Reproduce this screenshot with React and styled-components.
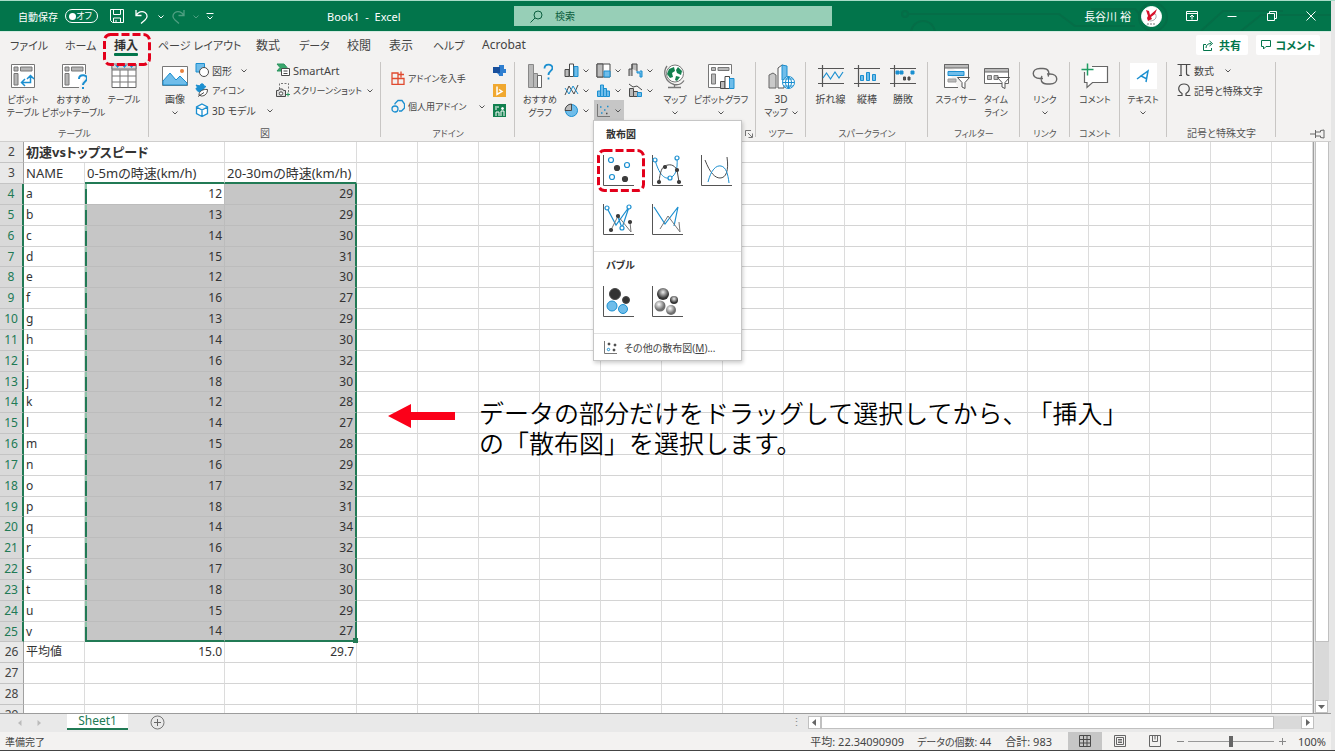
import React from 'react'
import styled, { createGlobalStyle, css } from 'styled-components'

const GREEN = '#02754b'
const BLUE = '#1b8fd0'
const LIGHTBLUE = '#6fbdea'
const INK = '#4a4a4a'

const GlobalStyle = createGlobalStyle`
* { box-sizing: border-box; }
body {
  margin: 0;
  background: #e6e6e6;
  color: #444;
  font-family: "Noto Sans", "Noto Sans CJK JP", sans-serif;
  font-size: 11px;
  font-feature-settings: "palt";
  overflow: hidden;
}
button, input {
  font: inherit;
  font-feature-settings: inherit;
  color: inherit;
  border: 0;
  padding: 0;
  margin: 0;
  background: none;
}
svg { display: block; flex: none; }
`

const Window = styled.div`
height: 100vh;
display: flex;
flex-direction: column;
padding-right: 4px;
border-top: 1px solid #a9dcc8;
border-bottom: 1px solid #444;
`

/* ---------- title bar ---------- */

const TitleBar = styled.header`
position: relative;
display: flex;
align-items: center;
height: 30px;
flex: none;
background: ${GREEN};
color: #fff;
`

const Circuit = styled.svg`
position: absolute;
right: 0;
top: 0;
`

const TitleLeft = styled.div`
width: 327px;
padding-left: 18px;
display: flex;
align-items: center;
`

const AutoSave = styled.label`
display: flex;
align-items: center;
gap: 6px;
width: 92px;
white-space: nowrap;
`

const AutoSaveText = styled.span`
width: 41px;
font-size: 10px;
`

const Toggle = styled.span`
position: relative;
display: flex;
align-items: center;
justify-content: space-between;
width: 33px;
height: 14px;
padding: 0 5px 0 3px;
border: 1px solid #fff;
border-radius: 7px;
font-size: 9px;
line-height: 12px;

&::before {
  content: "";
  width: 7px;
  height: 7px;
  border-radius: 50%;
  background: #fff;
}
`

const ToggleInput = styled.input`
position: absolute;
inset: 0;
opacity: 0;
`

const IconButton = styled.button`
display: flex;
align-items: center;
justify-content: center;
width: ${(p) => p.$w || 20}px;
height: ${(p) => p.$h || 20}px;
flex: none;
opacity: ${(p) => (p.disabled ? 0.3 : 1)};
`

const DocTitle = styled.div`
width: 187px;
white-space: pre;
`

const SearchBox = styled.label`
display: flex;
align-items: center;
gap: 12px;
width: 318px;
height: 20px;
padding-left: 16px;
background: #97cfb7;
color: #0c5f40;
z-index: 1;
`

const SearchInput = styled.input`
flex: 1;
font-size: 10px;
&::placeholder { color: #0c5f40; opacity: 1; }
`

const TitleRight = styled.div`
flex: 1;
display: flex;
align-items: center;
justify-content: flex-end;
z-index: 1;
`

const UserButton = styled.button`
display: flex;
align-items: center;
gap: 10px;
margin-right: 10px;
`

/* ---------- ribbon tabs ---------- */

const TabRow = styled.nav`
display: flex;
align-items: center;
height: 29px;
flex: none;
padding: 0 11px 0 10px;
background: #f3f2f1;
border-top: 1px solid #d5ebe2;
`

const Tab = styled.button`
position: relative;
width: ${(p) => p.$w}px;
height: 28px;
padding-bottom: 3px;
text-align: left;
white-space: nowrap;
font-size: ${(p) => p.$size}px;

${(p) => p.$active && css`
  font-weight: 700;
  color: #333;
  &::after {
    content: "";
    position: absolute;
    left: 0;
    top: 21px;
    width: 24px;
    height: 3px;
    border-radius: 1px;
    background: ${GREEN};
  }
`}
`

const MarkSvg = styled.svg`
position: absolute;
left: ${(p) => p.$left}px;
top: ${(p) => p.$top}px;
z-index: 3;
pointer-events: none;
`

const TabSpacer = styled.div`
flex: 1;
`

const ShareButton = styled.button`
display: flex;
align-items: center;
justify-content: center;
gap: 5px;
width: ${(p) => p.$w}px;
height: 20px;
margin: 0 0 2px 8px;
border-radius: 2px;
background: #fff;
color: ${GREEN};
font-weight: 700;
font-size: 11px;
white-space: nowrap;
`

/* ---------- ribbon ---------- */

const RibbonBar = styled.div`
display: flex;
height: 82px;
flex: none;
background: #f3f2f1;
border-bottom: 1px solid #cfcecd;
`

const GroupBox = styled.section`
position: relative;
display: flex;
flex-direction: column;
width: ${(p) => p.$w}px;
flex: none;

&::after {
  content: "";
  position: absolute;
  right: 0;
  top: 2px;
  width: 1px;
  height: 75px;
  background: #c8c6c4;
}
`

const GroupBody = styled.div`
flex: 1;
display: flex;
align-items: flex-start;
padding-left: ${(p) => p.$pad || 0}px;
`

const GroupName = styled.div`
height: 15px;
line-height: 15px;
text-align: center;
font-size: ${(p) => p.$size}px;
color: #555;
`

const BigBtn = styled.button`
display: flex;
flex-direction: column;
align-items: center;
width: ${(p) => p.$w}px;
padding-top: 3px;
line-height: 13px;
white-space: nowrap;
`

const BigLabel = styled.span`
display: flex;
flex-direction: column;
align-items: center;
margin: 4px -10px 0;
`

const BigLine = styled.span`
display: flex;
gap: 4px;
font-size: ${(p) => p.$size}px;
`

const Column = styled.div`
display: flex;
flex-direction: column;
width: ${(p) => p.$w}px;
padding-top: ${(p) => p.$top || 0}px;
gap: ${(p) => p.$gap || 0}px;
`

const SmallBtn = styled.button`
display: flex;
align-items: center;
gap: 3px;
height: 20px;
font-size: ${(p) => p.$size}px;
white-space: nowrap;
`

const SmallText = styled.span`
margin-right: ${(p) => p.$after || 0}px;
`

const ChartGrid = styled.div`
display: grid;
grid-template-columns: repeat(3, 32px);
grid-auto-rows: 20px;
width: 98px;
`

const ChartBtn = styled.button`
display: flex;
align-items: center;
gap: 4px;
width: 30px;
height: 20px;
padding-left: 2px;
background: ${(p) => (p.$open ? '#c6c6c6' : 'none')};
`

const MenuAnchor = styled.div`
position: relative;
`

const TextTile = styled.span`
display: flex;
align-items: center;
justify-content: center;
width: 27px;
height: 26px;
background: #fff;
`

const Launcher = styled.button`
position: absolute;
right: 3px;
bottom: 3px;
`

const RibbonEnd = styled.div`
flex: 1;
display: flex;
justify-content: flex-end;
align-items: flex-end;
padding: 0 6px 1px 0;
`

/* ---------- chart menu ---------- */

const Menu = styled.div`
position: absolute;
left: -1px;
top: 20px;
width: 149px;
z-index: 5;
background: #fff;
border: 1px solid #c6c6c6;
box-shadow: 1px 2px 4px rgba(0, 0, 0, 0.2);
`

const MenuTitle = styled.h3`
margin: 0;
padding: 5px 12px 0;
height: 25px;
font-size: 10px;
line-height: 17px;
color: #333;
`

const MenuGrid = styled.div`
display: grid;
grid-template-columns: repeat(3, 49px);
grid-auto-rows: 49px;
padding-bottom: ${(p) => p.$bottom}px;
border-bottom: 1px solid #e1e1e1;
`

const MenuItem = styled.button`
position: relative;
display: flex;
align-items: center;
justify-content: center;
`

const MenuFooter = styled.button`
display: flex;
align-items: center;
gap: 6px;
width: 100%;
height: 26px;
padding-left: 9px;
font-size: 10px;
white-space: nowrap;
`

/* ---------- sheet ---------- */

const SheetArea = styled.main`
flex: 1;
min-height: 0;
display: flex;
`

const SheetPane = styled.div`
position: relative;
flex: 1;
overflow: hidden;
background: #fff;
border-right: 1px solid #a0a0a0;
`

const Table = styled.table`
width: 100%;
table-layout: fixed;
border-collapse: separate;
border-spacing: 0;
font-size: 12px;
color: #333;
`

const Row = styled.tr`
height: 21px;
&:nth-child(6n) { height: 20px; }
`

const RowHead = styled.th`
padding: 0;
font-weight: 400;
line-height: 18px;
text-align: center;
color: ${(p) => (p.$on ? '#217a55' : '#444')};
background: ${(p) => (p.$on ? '#d9d9d9' : '#e9e9e9')};
border-bottom: 1px solid #c4c4c4;
border-right: ${(p) => (p.$on ? '2px solid #217a55' : '1px solid #a0a0a0')};
`

const Cell = styled.td`
position: relative;
padding: 0 2px;
line-height: 18px;
white-space: nowrap;
font-size: ${(p) => (p.$wide ? 13 : 12)}px;
text-align: ${(p) => (p.$num ? 'right' : 'left')};
font-weight: ${(p) => (p.$bold ? 700 : 400)};
border-right: 1px solid #dcdcdc;
border-bottom: 1px solid #d4d4d4;

${(p) => p.$selected && css`
  background-color: ${p.$cursor ? '#fff' : '#c6c6c6'};
  border-color: #bcbcbc;
`}
${(p) => p.$edgeLeft && css`
  background-image: linear-gradient(#8cc4a8 5px, #217a55 5px);
  background-size: 2px 100%;
  background-repeat: no-repeat;
`}
${(p) => p.$edgeRight && css`border-right: 2px solid #217a55;`}
${(p) => p.$edgeBottom && css`border-bottom: 2px solid #217a55;`}
`

const FillHandle = styled.span`
position: absolute;
right: -3px;
bottom: -3px;
width: 5px;
height: 5px;
background: #217a55;
z-index: 1;
`

const Note = styled.div`
position: absolute;
left: 388px;
top: 255px;
display: flex;
gap: 24px;
color: #000;
font-family: "Noto Sans CJK JP", sans-serif;
font-feature-settings: normal;
text-spacing-trim: space-all;
font-size: 25px;
font-weight: 350;
line-height: 30px;
white-space: nowrap;
`

const NoteText = styled.p`
margin: 0;
`

const VScroll = styled.div`
display: flex;
flex-direction: column;
width: 17px;
padding: 0 2px 0 1px;
background: #e6e6e6;
`

const VThumb = styled.div`
flex: 500;
background: #fff;
border: 1px solid #c0c0c0;
border-top: 0;
`

const VTrack = styled.div`
flex: 58;
background: #d9d9d9;
`

const ScrollButton = styled.button`
display: flex;
align-items: center;
justify-content: center;
width: 13px;
height: 13px;
background: #fff;
border: 1px solid #c0c0c0;
`

/* ---------- bottom bars ---------- */

const SheetBar = styled.div`
display: flex;
align-items: flex-start;
height: 19px;
flex: none;
padding-right: 17px;
background: #e9e9e9;
border-top: 1px solid #9c9c9c;
`

const SheetNav = styled.div`
display: flex;
width: 67px;
padding-left: 10px;
`

const SheetTab = styled.button`
width: 61px;
height: 16px;
background: #fff;
color: #217a55;
border-bottom: 2px solid #217a55;
font-size: 12px;
line-height: 12px;
`

const SheetSpacer = styled.div`
flex: 1;
`

const Grip = styled.span`
width: 17px;
color: #888;
line-height: 16px;
`

const HScroll = styled.div`
display: flex;
width: 506px;
height: 13px;
margin-top: 2px;
background: #d9d9d9;
`

const HThumb = styled.div`
width: 453px;
background: #fff;
border: 1px solid #c0c0c0;
`

const StatusBar = styled.footer`
display: flex;
align-items: center;
height: 18px;
flex: none;
padding: 0 5px;
background: #f3f2f1;
font-size: 10px;
`

const Stat = styled.span`
margin-right: ${(p) => p.$after}px;
font-size: ${(p) => p.$size}px;
white-space: nowrap;
`

const ViewButton = styled(IconButton)`
height: 18px;
background: ${(p) => (p.$on ? '#c6c6c6' : 'none')};
`

const ZoomRange = styled.input`
appearance: none;
width: 86px;
height: 12px;
background: linear-gradient(#999, #999) center / 100% 1px no-repeat;
&::-webkit-slider-thumb {
  appearance: none;
  width: 4px;
  height: 11px;
  background: #666;
}
`

const ZoomText = styled.button`
width: 36px;
text-align: right;
font-size: 11px;
`

/* ---------- icons ---------- */

const Icon = ({ size = 14, w, h, box, children }) => (
  <svg
    width={w || size}
    height={h || size}
    viewBox={box || `0 0 ${w || size} ${h || size}`}
    fill="none"
    stroke={INK}
    aria-hidden="true"
  >
    {children}
  </svg>
)

const Chevron = ({ color = '#555' }) => (
  <Icon w={6} h={13}>
    <path d="M.5 5.5 3 8l2.5-2.5" stroke={color} />
  </Icon>
)

const RedMark = ({ w, h, left, top }) => (
  <MarkSvg width={w} height={h} $left={left} $top={top} aria-hidden="true">
    <rect x="1.5" y="1.5" width={w - 3} height={h - 3} rx="6" fill="none" stroke="#e3001b" strokeWidth="3" strokeDasharray="8 3" />
  </MarkSvg>
)

const SaveIcon = () => (
  <Icon size={14}>
    <path d="M.5.5h13v13h-11l-2-2zM3.5.5v5h7v-5M3.5 13.500V9h7v4.500M6 11v2" stroke="#fff" />
  </Icon>
)

const UndoIcon = ({ flip }) => (
  <Icon size={15}>
    <g transform={flip ? 'matrix(-1 0 0 1 15 0)' : undefined}>
      <path d="M2 1v5.500h5.500M2 6.500C4 3 8 1.500 11 3.500c3 2.200 2.500 5.500 0 7.500l-4 3.500" stroke="#fff" strokeWidth="1.300" />
    </g>
  </Icon>
)

const PivotIcon = ({ kind }) => (
  <Icon size={26}>
    <path d={kind === 'ask' ? 'M18 24.500H1.500v-23h23V11' : 'M1.500 1.500h23v23h-23z'} fill="#fff" stroke="#777" />
    <path d="M4 4h4v4H4zM10.500 4H22v4H10.500zM4 10.500h4V22H4z" fill="#b5b5b5" stroke="#777" />
    {kind === 'ask' ? (
      <path d="M18 16c0-5 8-5 8-.500 0 3-4 3-4 6.500M22 24v2" stroke={BLUE} strokeWidth="2" />
    ) : (
      <path d="M12 19.500h8.500V13M15 16l-3.500 3.500L15 23M17 16l3.500-3.500L24 16" stroke={BLUE} strokeWidth="1.500" />
    )}
  </Icon>
)

const TableIcon = () => (
  <Icon size={26}>
    <path d="M1 1.500h24v23H1z" fill="#fff" stroke="#666" />
    <path d="M1 7h24M1 13h24M1 19h24M9 7v17.500M17 7v17.500" stroke="#777" />
    <path d="M1 1h24v5H1z" fill="#d8d8d8" stroke="#777" />
    <path d="M4 2h5L6.500 5zM11 2h5l-2.500 3zM18 2h5l-2.500 3z" fill={BLUE} stroke="none" />
  </Icon>
)

const PictureIcon = () => (
  <Icon size={26}>
    <path d="M.5 3.500h25v19H.5z" fill="#fff" stroke="#777" />
    <path d="M1 18l7-8 6 7 4-4 7 7v2H1z" fill={LIGHTBLUE} stroke={BLUE} />
    <circle cx="20" cy="8" r="2" fill="#e8803a" stroke="none" />
  </Icon>
)

const ShapesIcon = () => (
  <Icon size={14}>
    <path d="M1 .5h8.500v8.500H1z" fill={LIGHTBLUE} stroke={BLUE} />
    <circle cx="9" cy="9" r="4.500" fill="#fff" />
  </Icon>
)

const BirdIcon = () => (
  <Icon size={14}>
    <path d="M1 2l4 1c0-3 4-3 4 0l2 .5-2 1.500c0 3-2 4-4 4-2 0-4-2-4-4l2 0z" fill={BLUE} stroke={BLUE} />
    <path d="M4 12c0-4 4-6 8.500-5.500 0 4-2.500 6.500-6 6.500zM3 13.500l6-4" fill="#fff" />
  </Icon>
)

const CubeIcon = () => (
  <Icon size={14}>
    <path d="M7 1l5.500 3v6.500L7 13.500l-5.500-3V4zM1.500 4L7 7l5.500-3M7 7v6.500" fill="#fff" stroke={BLUE} strokeWidth="1.300" />
  </Icon>
)

const SmartArtIcon = () => (
  <Icon size={14}>
    <path d="M1 1h7l3 3.500L8 8H1l3-3.500z" fill="#3aa66c" stroke="#2b9560" />
    <path d="M5.500 5.500h8v7h-8zM7.500 8h4M7.500 10.500h4" fill="#fff" />
  </Icon>
)

const ShotIcon = () => (
  <Icon size={14}>
    <path d="M3.500 6V.5h9V9" strokeDasharray="2 1.500" stroke="#777" />
    <path d="M.5 7.500h2l1-1.500h3l1 1.500h2v6h-9z" fill="#ddd" />
    <circle cx="5" cy="10.500" r="1.700" fill="#fff" />
    <path d="M12 9.500v4M10 11.500h4" stroke="#2b9560" />
  </Icon>
)

const StoreIcon = () => (
  <Icon size={14}>
    <path d="M1 2h6v11.500H1zM1 7.500h12v6H7M10 .5v6M7 3.500h6" stroke="#e04a2f" strokeWidth="1.300" />
  </Icon>
)

const MyAddinIcon = () => (
  <Icon size={14}>
    <path d="M4 5.500V4.500L7 1.500h4L13.500 5v4l-3 3H8" stroke={BLUE} strokeWidth="1.300" />
    <circle cx="4" cy="10" r="3" stroke={BLUE} strokeWidth="1.300" />
  </Icon>
)

const VisioIcon = () => (
  <Icon size={13}>
    <path d="M7 1l5.500 5.500L7 12 3 8z" fill="#2f7fd0" stroke="none" />
    <path d="M6 1h5v4h2v4h-3v3H6z" fill="#2f7fd0" stroke="none" />
    <path d="M0 3h7v6H0z" fill="#174f9c" stroke="none" />
  </Icon>
)

const BingIcon = () => (
  <Icon size={13}>
    <path d="M0 0h13v13H0z" fill="#f0a830" stroke="none" />
    <path d="M4 2.500v8l5-3-3-2" stroke="#fff" strokeWidth="1.500" />
  </Icon>
)

const PeopleIcon = () => (
  <Icon size={13}>
    <path d="M0 0h13v13H0z" fill="#12804f" stroke="none" />
    <path d="M2 3h4M2 5h2M3 12V8h3v4M8 12V7h3v5" stroke="#fff" />
    <circle cx="9.500" cy="4.500" r="1" fill="#fff" stroke="#fff" />
  </Icon>
)

const AskChartIcon = () => (
  <Icon size={26}>
    <path d="M1.500 1.500h5v23h-5z" fill="#b9b9b9" stroke="#888" />
    <path d="M6.500 10.500h4v14h-4z" fill="#b9b9b9" stroke="#888" />
    <path d="M10.500 12.500h4v12h-4z" fill="#fff" stroke="#666" />
    <path d="M17.500 5.500c0-5 8-5 8-.500 0 3-4 3-4 7M21.500 14.500v2" stroke={BLUE} strokeWidth="1.800" />
  </Icon>
)

const ColumnIcon = () => (
  <Icon size={15}>
    <path d="M1 6.500h4v7H1z" fill="#bbb" />
    <path d="M5.500 1h4v12.500h-4z" fill="#fff" />
    <path d="M10 3.500h4v10h-4z" fill={LIGHTBLUE} stroke={BLUE} />
  </Icon>
)

const TreemapIcon = () => (
  <Icon size={15}>
    <path d="M1 1h13v13H1z" fill="#fff" />
    <path d="M1 1h6v13H1z" fill="#bbb" />
    <path d="M8 8h6v6H8z" fill={LIGHTBLUE} stroke={BLUE} />
  </Icon>
)

const WaterfallIcon = () => (
  <Icon size={15}>
    <path d="M1 13V6h3v7M4 6V1h5v7M4 1v5" fill="#bbb" />
    <path d="M9 8v2h3v4h2V8h-2" fill={LIGHTBLUE} stroke={BLUE} />
  </Icon>
)

const LineIcon = () => (
  <Icon size={15}>
    <path d="M1 12L5 3l5 8 4-9" />
    <path d="M1 5l4 6 4-8 5 8" stroke={BLUE} />
  </Icon>
)

const HistogramIcon = () => (
  <Icon size={15}>
    <path d="M1.500 13.500V8h3v5.500zM4.500 13.500V2h3v11.500zM7.500 13.500v-8h3v8zM10.500 13.500V8h3v5.500z" fill={LIGHTBLUE} stroke={BLUE} />
  </Icon>
)

const ComboIcon = () => (
  <Icon size={15}>
    <path d="M1.500 5.500h4v8h-4zM5.500 8.500h4v5h-4z" fill="#bbb" />
    <path d="M9.500 9.500h4v4h-4z" fill={LIGHTBLUE} stroke={BLUE} />
    <path d="M1 1l4 3 4-1 5 4" />
  </Icon>
)

const PieIcon = () => (
  <Icon size={15}>
    <circle cx="7.500" cy="7.500" r="6" fill={LIGHTBLUE} stroke={BLUE} />
    <path d="M7.500 7.500V1A6.500 6.500 0 001 7.500z" fill="#bbb" />
  </Icon>
)

const ScatterIcon = () => (
  <Icon size={15}>
    <path d="M1.500 1v12.500H14" stroke="#777" />
    <path d="M4 4h1.500M8 7h1.500M11 3.500h1.500M5 10h1.500" stroke={BLUE} strokeWidth="1.500" />
    <path d="M10 10.500h1.500" strokeWidth="1.500" />
  </Icon>
)

const GlobeIcon = () => (
  <Icon size={26}>
    <circle cx="13" cy="10.500" r="8.500" fill="#fff" stroke="#777" />
    <path d="M7 6l5-2 1 4-3 2 1 4-3 1-3-4zM16 4l4 4-1 4-4-2-1-3zM14 13l4 1-3 4-2-1z" fill="#12804f" stroke="none" />
    <path d="M5 3C.5 9 3 19 12 21.500c5 1 8-1 10-4M12.500 21.500v3M6 24.500h13" stroke="#777" strokeWidth="1.300" />
  </Icon>
)

const PivotChartIcon = () => (
  <Icon w={28} h={26}>
    <path d="M13 24.500H1.500v-23h23V11" fill="#fff" stroke="#777" />
    <path d="M4.500 4.500h4v3h-4zM11 4.500h11v3H11zM4.500 11h4v10h-4z" fill="#b9b9b9" stroke="#777" />
    <path d="M13.500 18.500h4.500v7h-4.500z" fill="#bbb" />
    <path d="M18 13.500h4.500v12H18z" fill="#fff" />
    <path d="M22.500 15.500H27v10h-4.500z" fill={LIGHTBLUE} stroke={BLUE} />
  </Icon>
)

const Map3DIcon = () => (
  <Icon w={27} h={26}>
    <path d="M1 12l4-2 3 2v13H1z" fill="#c9c9c9" stroke="#666" />
    <path d="M10 5l4-3 2 1v22h-6z" fill="#fff" stroke="#555" />
    <path d="M14 2l5 1v14h-5z" fill={LIGHTBLUE} stroke={BLUE} />
    <circle cx="20.500" cy="19.500" r="6" fill="#fff" stroke={BLUE} />
    <path d="M14.500 19.500h12M20.500 13.500v12M20.500 13.500c-4 4-4 8 0 12M20.500 13.500c4 4 4 8 0 12M16 16h9M16 23h9" stroke={BLUE} />
  </Icon>
)

const SparkIcon = ({ kind }) => (
  <Icon size={26}>
    <path d="M0 5.500h26M0 20.500h26M4.500 2v22" stroke="#555" strokeWidth="1.200" />
    {kind === 'line' && <path d="M5 15l3.500-5 4 6 4.500-7 4 6 4-6" stroke={BLUE} strokeWidth="1.200" />}
    {kind === 'column' && <path d="M6.500 12.500h3v5h-3zM12.500 9.500h3v8h-3zM18.500 11.500h3v6h-3z" fill={LIGHTBLUE} stroke={BLUE} />}
    {kind === 'winloss' && (
      <>
        <path d="M6 8h3v3H6zM10 8h3v3h-3zM21 8h3v3h-3z" fill={BLUE} stroke={BLUE} />
        <path d="M13.500 14h2v3h-2zM18 14h2v3h-2z" fill="#555" />
      </>
    )}
  </Icon>
)

const Funnel = () => (
  <path d="M14.500 14.500h12l-4.500 5v6l-3-1.500v-4.500z" fill="#fff" stroke="#555" />
)

const SlicerIcon = () => (
  <Icon w={27} h={26}>
    <path d="M1.500 1.500h24V14M15 24.500H1.500v-23" fill="#fff" stroke="#666" />
    <path d="M1.500 1.500h24v3.500h-24z" fill="#bbb" stroke="#666" />
    <path d="M5 8.500h16v4H5z" fill={LIGHTBLUE} stroke={BLUE} />
    <path d="M5 16h8v3H5z" fill="#bbb" stroke="#999" />
    <Funnel />
  </Icon>
)

const TimelineIcon = () => (
  <Icon w={27} h={26}>
    <path d="M1.500 6.500h24v14h-24z" fill="#fff" stroke="#666" />
    <path d="M1.500 5.500h24v3.500h-24z" fill="#bbb" stroke="#666" />
    <path d="M4.500 12.500h4v4h-4zM11 12.500h4v4h-4z" fill="#bbb" stroke="#777" />
    <Funnel />
  </Icon>
)

const LinkIcon = () => (
  <Icon size={26}>
    <path d="M11 15.500H8c-9 0-9-10 0-10h3c6 0 7 5 5 8" stroke="#666" strokeWidth="1.400" />
    <path d="M15 11h3c9 0 9 10 0 10h-3c-6 0-7-5-5-8" stroke="#666" strokeWidth="1.400" />
  </Icon>
)

const CommentIcon = () => (
  <Icon w={28} h={26}>
    <path d="M11 3.500h15.500v16H11.500L6 24.500v-5H3.500V9" fill="#fff" stroke="#666" strokeWidth="1.200" />
    <path d="M6.500.5v12M.5 6.500h12" stroke="#1f9d63" strokeWidth="1.500" />
  </Icon>
)

const TextIcon = () => (
  <Icon size={16}>
    <path d="M2 11L13 3l-2 11M13 3L6 8l6 3" stroke={BLUE} strokeWidth="1.500" />
  </Icon>
)

const PiIcon = () => (
  <Icon size={14}>
    <path d="M.5 1.500h13M4 1.500v11M9.500 1.500v9c0 2 1.500 2 3 2M2 12.500h3" strokeWidth="1.200" />
  </Icon>
)

const OmegaIcon = () => (
  <Icon size={14}>
    <path d="M.5 12.500H5v-2C-.500 7 1.500 1 7 1s7.500 6 2 9.500v2h4.500" strokeWidth="1.200" />
  </Icon>
)

const PinIcon = () => (
  <Icon w={15} h={12}>
    <path d="M0 6h5M5.500 2v8M5.500 4h5V2.500L14 2v8l-3.500-.5V8h-5" stroke="#666" />
  </Icon>
)

const Axes = () => <path d="M1.500 1v30.500H32" stroke="#555" />

const Dots = ({ points, r = 2.500, ring }) =>
  points.map(([x, y]) => (
    <circle key={`${x}-${y}`} cx={x} cy={y} r={r} fill={ring ? '#fff' : '#3c3c3c'} stroke={ring ? BLUE : '#3c3c3c'} strokeWidth="1.200" />
  ))

const ScatterItem = ({ kind }) => (
  <Icon size={33}>
    <Axes />
    {kind === 'dots' && (
      <>
        <Dots points={[[9, 6], [25, 11], [10, 23]]} ring />
        <Dots points={[[15, 14], [23, 25]]} />
      </>
    )}
    {kind === 'smoothDots' && (
      <>
        <path d="M4 6c4 14 9 19 14 18 6-1 9-8 8-20" stroke={BLUE} />
        <path d="M8 28c1-10 3-15 6-16 4-2 9-2 12 4l2 12" />
        <Dots points={[[4, 6], [26, 4], [19, 24]]} r={2} ring />
        <Dots points={[[8, 28], [14, 13], [26, 16], [28, 28]]} r={1.500} />
      </>
    )}
    {kind === 'smooth' && (
      <>
        <path d="M5 6c5 13 10 18 15 18 6 0 9-7 7-21" />
        <path d="M8 28c3-12 8-17 13-16 5 1 7 8 8 17" stroke={BLUE} />
      </>
    )}
    {kind === 'lineDots' && (
      <>
        <path d="M5 5l9 17L27 4l-7 21-4-11" stroke={BLUE} strokeWidth="1.200" />
        <path d="M9 27l7-14 13 16-1-10" stroke="#777" />
        <Dots points={[[5, 5], [27, 4], [20, 25]]} r={2} ring />
        <Dots points={[[9, 27], [16, 13], [28, 19]]} r={1.500} />
      </>
    )}
    {kind === 'lines' && (
      <>
        <path d="M3 4l11 17L27 4l-4 19" stroke={BLUE} strokeWidth="1.200" />
        <path d="M9 26l8-13 12 16-1-10" stroke="#777" />
      </>
    )}
    {kind === 'bubble' && (
      <>
        <circle cx="13" cy="9" r="5.500" fill="#333" />
        <circle cx="24" cy="15" r="3.500" fill="#333" />
        <circle cx="10" cy="21" r="5" fill={LIGHTBLUE} stroke={BLUE} />
        <circle cx="21" cy="24" r="4.500" fill={LIGHTBLUE} stroke={BLUE} />
      </>
    )}
    {kind === 'bubble3d' && (
      <>
        <defs>
          <radialGradient id="ball" cx="40%" cy="35%">
            <stop offset="0" stopColor="#fff" />
            <stop offset="1" stopColor="#6e6e6e" />
          </radialGradient>
          <radialGradient id="darkBall" cx="50%" cy="35%">
            <stop offset="0" stopColor="#eee" />
            <stop offset="1" stopColor="#333" />
          </radialGradient>
        </defs>
        <circle cx="12" cy="9" r="6" fill="url(#darkBall)" stroke="none" />
        <circle cx="23" cy="15" r="4" fill="url(#darkBall)" stroke="none" />
        <circle cx="9" cy="21" r="5.500" fill="url(#ball)" stroke="none" />
        <circle cx="20" cy="25" r="5" fill="url(#ball)" stroke="none" />
      </>
    )}
  </Icon>
)

/* ---------- data ---------- */

const tabs = [
  ['ファイル', 55], ['ホーム', 49], ['挿入', 44], ['ページ レイアウト', 98], ['数式', 43],
  ['データ', 48], ['校閲', 42], ['表示', 44], ['ヘルプ', 49], ['Acrobat', 60],
]

const speeds = [
  ['a', 12, 29], ['b', 13, 29], ['c', 14, 30], ['d', 15, 31], ['e', 12, 30],
  ['f', 16, 27], ['g', 13, 29], ['h', 14, 30], ['i', 16, 32], ['j', 18, 30],
  ['k', 12, 28], ['l', 14, 27], ['m', 15, 28], ['n', 16, 29], ['o', 17, 32],
  ['p', 18, 31], ['q', 14, 34], ['r', 16, 32], ['s', 17, 30], ['t', 18, 30],
  ['u', 15, 29], ['v', 14, 27],
]

const columns = [24, 61, 140, 132, ...Array(15).fill(61)]
const blanks = Array.from({ length: 16 }, (_, i) => i)

// kana-only labels are set one step smaller than labels with kanji or latin
const labelSize = (text, base = 10) => (/[一-龠A-Za-z]/.test(text) ? base : base - 1)

/* ---------- parts ---------- */

const Group = ({ name, w, pad, launcher, children }) => (
  <GroupBox $w={w}>
    <GroupBody $pad={pad}>{children}</GroupBody>
    <GroupName $size={labelSize(name)}>{name}</GroupName>
    {launcher && (
      <Launcher aria-label="グラフの詳細">
        <Icon size={8}>
          <path d="M.5 6V.5H6M3 3l4 4M7.500 3.500v4h-4" stroke="#777" />
        </Icon>
      </Launcher>
    )}
  </GroupBox>
)

const Big = ({ w, icon, lines, arrow, inlineArrow }) => (
  <BigBtn $w={w}>
    {icon}
    <BigLabel>
      {lines.map((line, i) => (
        <BigLine key={line} $size={labelSize(line)}>
          {line}
          {inlineArrow && i === lines.length - 1 && <Chevron />}
        </BigLine>
      ))}
      {arrow && <Chevron />}
    </BigLabel>
  </BigBtn>
)

const Small = ({ icon, text, arrow, after = 6, size = 10 }) => (
  <SmallBtn $size={size}>
    {icon}
    <SmallText $after={arrow ? after : 0}>{text}</SmallText>
    {arrow && <Chevron />}
  </SmallBtn>
)

const ScatterMenu = () => (
  <Menu>
    <MenuTitle>散布図</MenuTitle>
    <MenuGrid $bottom={7}>
      <MenuItem aria-label="散布図">
        <ScatterItem kind="dots" />
        <RedMark w={48} h={43} left={3} top={3} />
      </MenuItem>
      <MenuItem aria-label="散布図 (平滑線とマーカー)"><ScatterItem kind="smoothDots" /></MenuItem>
      <MenuItem aria-label="散布図 (平滑線)"><ScatterItem kind="smooth" /></MenuItem>
      <MenuItem aria-label="散布図 (直線とマーカー)"><ScatterItem kind="lineDots" /></MenuItem>
      <MenuItem aria-label="散布図 (直線)"><ScatterItem kind="lines" /></MenuItem>
    </MenuGrid>
    <MenuTitle>バブル</MenuTitle>
    <MenuGrid $bottom={7}>
      <MenuItem aria-label="バブル"><ScatterItem kind="bubble" /></MenuItem>
      <MenuItem aria-label="3-D 効果付きバブル"><ScatterItem kind="bubble3d" /></MenuItem>
    </MenuGrid>
    <MenuFooter>
      <Icon size={15}>
        <path d="M1.500 1v12.500H14" stroke="#777" />
        <circle cx="6" cy="4" r="1" fill="#333" />
        <circle cx="12" cy="5" r="1" fill="#333" />
        <circle cx="5.500" cy="9.500" r="1.200" stroke={BLUE} />
        <circle cx="11" cy="10" r="1" fill="#333" />
      </Icon>
      <span>その他の散布図(<u>M</u>)...</span>
    </MenuFooter>
  </Menu>
)

const Title = () => (
  <TitleBar>
    <Circuit width="430" height="30" fill="none" stroke="#056d47" strokeWidth="2" aria-hidden="true">
      <circle cx="4" cy="13" r="3" />
      <path d="M8 13h150l16 12h60" />
      <circle cx="22" cy="32" r="12" />
      <path d="M190 8h44l12 14M300 30l22-20h60M340 30l20-16h70" />
      <circle cx="252" cy="16" r="14" />
    </Circuit>
    <TitleLeft>
      <AutoSave>
        <AutoSaveText>自動保存</AutoSaveText>
        <Toggle>
          <ToggleInput type="checkbox" aria-label="自動保存" />
          オフ
        </Toggle>
      </AutoSave>
      <IconButton aria-label="保存" $w={14}><SaveIcon /></IconButton>
      <IconButton aria-label="元に戻す" $w={34}><UndoIcon /></IconButton>
      <Chevron color="#fff" />
      <IconButton aria-label="やり直し" $w={28} disabled><UndoIcon flip /></IconButton>
      <IconButton aria-label="やり直し一覧" $w={8} disabled><Chevron color="#fff" /></IconButton>
      <IconButton aria-label="クイック アクセス ツール バー" $w={20}>
        <Icon size={8}>
          <path d="M.5 1.500h7M1.500 4.500L4 7l2.500-2.500" stroke="#fff" />
        </Icon>
      </IconButton>
    </TitleLeft>
    <DocTitle>Book1  -  Excel</DocTitle>
    <SearchBox>
      <Icon size={13}>
        <circle cx="8" cy="5" r="4" stroke="#0c5f40" />
        <path d="M5 8l-4.500 4.500" stroke="#0c5f40" />
      </Icon>
      <SearchInput placeholder="検索" aria-label="検索" />
    </SearchBox>
    <TitleRight>
      <UserButton>
        長谷川 裕
        <Icon size={21}>
          <circle cx="10.500" cy="10.500" r="10" fill="#fff" stroke="#fff" />
          <path d="M5 4l3 1 1 4 7-6-2 5-4 3 1 2-4 2-1-3 1-2z" fill="#d8122a" stroke="none" />
          <path d="M14.500 8c2 4-1 7-6 7" stroke="#aaa" />
          <path d="M6 18h9" stroke="#777" strokeDasharray="2 1" />
        </Icon>
      </UserButton>
      <IconButton aria-label="リボンの表示オプション" $w={40}>
        <Icon w={12} h={10}>
          <path d="M.5.5h11v9H.5zM.5 2.500h11M6 8.500v-4M4 6l2-2 2 2" stroke="#fff" />
        </Icon>
      </IconButton>
      <IconButton aria-label="最小化" $w={40}>
        <Icon size={10}><path d="M.5 5.500h9" stroke="#fff" /></Icon>
      </IconButton>
      <IconButton aria-label="元のサイズに戻す" $w={39}>
        <Icon size={10}><path d="M.5 2.500h7v7h-7zM2.500 2.500v-2h7v7h-2" stroke="#fff" /></Icon>
      </IconButton>
      <IconButton aria-label="閉じる" $w={40}>
        <Icon size={10}><path d="M.5.5l9 9M9.500.5l-9 9" stroke="#fff" /></Icon>
      </IconButton>
    </TitleRight>
  </TitleBar>
)

const Tabs = () => (
  <TabRow>
    {tabs.map(([name, w]) => (
      <Tab key={name} $w={w} $size={labelSize(name, 12)} $active={name === '挿入'}>
        {name}
        {name === '挿入' && <RedMark w={48} h={33} left={-11} top={1} />}
      </Tab>
    ))}
    <TabSpacer />
    <ShareButton $w={52}>
      <Icon size={11}>
        <path d="M3 4.500H.5v6h8V8M3 8c0-3 2-4.500 5-4.500M6.500 1l3 2.500-3 2.500" stroke={GREEN} />
      </Icon>
      共有
    </ShareButton>
    <ShareButton $w={64}>
      <Icon size={10}>
        <path d="M.5.5h9v6H5L2.500 9V6.500h-2z" stroke={GREEN} />
      </Icon>
      コメント
    </ShareButton>
  </TabRow>
)

const chartIcons = [
  ['縦棒', ColumnIcon], ['階層構造', TreemapIcon], ['ウォーターフォール', WaterfallIcon],
  ['折れ線', LineIcon], ['統計', HistogramIcon], ['複合', ComboIcon], ['円', PieIcon],
]

const Ribbon = () => (
  <RibbonBar>
    <Group name="テーブル" w={149}>
      <Big w={46} icon={<PivotIcon />} lines={['ピボット', 'テーブル']} />
      <Big w={55} icon={<PivotIcon kind="ask" />} lines={['おすすめ', 'ピボットテーブル']} />
      <Big w={46} icon={<TableIcon />} lines={['テーブル']} />
    </Group>
    <Group name="図" w={232} pad={6}>
      <Big w={40} icon={<PictureIcon />} lines={['画像']} arrow />
      <Column $w={81}>
        <Small icon={<ShapesIcon />} text="図形" arrow />
        <Small icon={<BirdIcon />} text="アイコン" size={9} />
        <Small icon={<CubeIcon />} text="3D モデル" arrow after={8} />
      </Column>
      <Column>
        <Small icon={<SmartArtIcon />} text="SmartArt" size={11} />
        <Small icon={<ShotIcon />} text="スクリーンショット" arrow after={2} size={9} />
      </Column>
    </Group>
    <Group name="アドイン" w={134} pad={10}>
      <Column $w={102} $top={8} $gap={8}>
        <Small icon={<StoreIcon />} text="アドインを入手" size={9} />
        <Small icon={<MyAddinIcon />} text="個人用アドイン" arrow after={10} size={9} />
      </Column>
      <Column>
        <Small icon={<VisioIcon />} />
        <Small icon={<BingIcon />} />
        <Small icon={<PeopleIcon />} />
      </Column>
    </Group>
    <Group name="" w={241} pad={3} launcher>
      <Big w={44} icon={<AskChartIcon />} lines={['おすすめ', 'グラフ']} />
      <ChartGrid>
        {chartIcons.map(([name, Glyph]) => (
          <ChartBtn key={name} aria-label={name}><Glyph /><Chevron /></ChartBtn>
        ))}
        <MenuAnchor>
          <ChartBtn $open aria-label="散布図の挿入"><ScatterIcon /><Chevron /></ChartBtn>
          <ScatterMenu />
        </MenuAnchor>
      </ChartGrid>
      <Big w={30} icon={<GlobeIcon />} lines={['マップ']} arrow />
      <Big w={62} icon={<PivotChartIcon />} lines={['ピボットグラフ']} arrow />
    </Group>
    <Group name="ツアー" w={50} pad={2}>
      <Big w={46} icon={<Map3DIcon />} lines={['3D', 'マップ']} inlineArrow />
    </Group>
    <Group name="スパークライン" w={122} pad={6}>
      <Big w={37} icon={<SparkIcon kind="line" />} lines={['折れ線']} />
      <Big w={36} icon={<SparkIcon kind="column" />} lines={['縦棒']} />
      <Big w={36} icon={<SparkIcon kind="winloss" />} lines={['勝敗']} />
    </Group>
    <Group name="フィルター" w={92} pad={7}>
      <Big w={42} icon={<SlicerIcon />} lines={['スライサー']} />
      <Big w={38} icon={<TimelineIcon />} lines={['タイム', 'ライン']} />
    </Group>
    <Group name="リンク" w={50} pad={2}>
      <Big w={46} icon={<LinkIcon />} lines={['リンク']} arrow />
    </Group>
    <Group name="コメント" w={50} pad={2}>
      <Big w={46} icon={<CommentIcon />} lines={['コメント']} />
    </Group>
    <Group name="" w={47} pad={1}>
      <Big w={44} icon={<TextTile><TextIcon /></TextTile>} lines={['テキスト']} arrow />
    </Group>
    <Group name="記号と特殊文字" w={109} pad={10}>
      <Column>
        <Small icon={<PiIcon />} text="数式" arrow after={8} />
        <Small icon={<OmegaIcon />} text="記号と特殊文字" />
      </Column>
    </Group>
    <RibbonEnd>
      <button aria-label="リボンを固定"><PinIcon /></button>
    </RibbonEnd>
  </RibbonBar>
)

const Blanks = () => blanks.map((i) => <Cell key={i} />)

const Sheet = () => (
  <SheetArea>
    <SheetPane>
      <Table>
        <colgroup>
          {columns.map((w, i) => <col key={i} width={w} />)}
          <col />
        </colgroup>
        <tbody>
          <Row>
            <RowHead>2</RowHead>
            <Cell colSpan={2} $bold $wide>初速vsトップスピード</Cell>
            <Cell />
            <Blanks />
          </Row>
          <Row>
            <RowHead>3</RowHead>
            <Cell $wide>NAME</Cell>
            <Cell $wide $edgeBottom>0-5mの時速(km/h)</Cell>
            <Cell $wide $edgeBottom>20-30mの時速(km/h)</Cell>
            <Blanks />
          </Row>
          {speeds.map(([name, start, top], i) => {
            const last = i === speeds.length - 1
            return (
              <Row key={name}>
                <RowHead $on>{i + 4}</RowHead>
                <Cell>{name}</Cell>
                <Cell $num $selected $cursor={i === 0} $edgeLeft $edgeBottom={last}>{start}</Cell>
                <Cell $num $selected $edgeRight $edgeBottom={last}>
                  {top}
                  {last && <FillHandle />}
                </Cell>
                <Blanks />
              </Row>
            )
          })}
          <Row>
            <RowHead>26</RowHead>
            <Cell>平均値</Cell>
            <Cell $num>15.0</Cell>
            <Cell $num>29.7</Cell>
            <Blanks />
          </Row>
          {[27, 28, 29].map((n) => (
            <Row key={n}>
              <RowHead>{n}</RowHead>
              <Cell />
              <Cell />
              <Cell />
              <Blanks />
            </Row>
          ))}
        </tbody>
      </Table>
      <Note>
        <svg width="67" height="38" aria-hidden="true">
          <path d="M0 19L23 7v8h44v8H23v8z" fill="#fb0019" />
        </svg>
        <NoteText>
          データの部分だけをドラッグして選択してから、「挿入」<br />
          の「散布図」を選択します。
        </NoteText>
      </Note>
    </SheetPane>
    <VScroll>
      <VThumb />
      <VTrack />
      <ScrollButton aria-label="下へスクロール">
        <Icon size={7}><path d="M0 2h7L3.500 6z" fill="#666" stroke="none" /></Icon>
      </ScrollButton>
    </VScroll>
  </SheetArea>
)

const Bottom = () => (
  <>
    <SheetBar>
      <SheetNav>
        <IconButton aria-label="前のシート" $w={19} $h={17}>
          <Icon size={6}><path d="M4.500 0v6L1 3z" fill="#bbb" stroke="none" /></Icon>
        </IconButton>
        <IconButton aria-label="次のシート" $w={19} $h={17}>
          <Icon size={6}><path d="M1.500 0v6L5 3z" fill="#bbb" stroke="none" /></Icon>
        </IconButton>
      </SheetNav>
      <SheetTab>Sheet1</SheetTab>
      <IconButton aria-label="新しいシート" $w={58} $h={17}>
        <Icon size={15}>
          <circle cx="7.500" cy="7.500" r="6.500" stroke="#777" />
          <path d="M7.500 4v7M4 7.500h7" stroke="#666" />
        </Icon>
      </IconButton>
      <SheetSpacer />
      <Grip>⋮</Grip>
      <HScroll>
        <ScrollButton aria-label="左へスクロール">
          <Icon size={7}><path d="M5 0v7L1 3.500z" fill="#666" stroke="none" /></Icon>
        </ScrollButton>
        <HThumb />
        <SheetSpacer />
        <ScrollButton aria-label="右へスクロール">
          <Icon size={7}><path d="M2 0v7l4-3.500z" fill="#666" stroke="none" /></Icon>
        </ScrollButton>
      </HScroll>
    </SheetBar>
    <StatusBar>
      <span>準備完了</span>
      <SheetSpacer />
      <Stat $size={11} $after={13}>平均: 22.34090909</Stat>
      <Stat $size={10} $after={14}>データの個数: 44</Stat>
      <Stat $size={11} $after={16}>合計: 983</Stat>
      <ViewButton $w={34} $on aria-label="標準">
        <Icon size={12}><path d="M.5.5h11v11H.5zM4.500.5v11M8 .5v11M.5 4.500h11M.5 8h11" /></Icon>
      </ViewButton>
      <ViewButton $w={35} aria-label="ページ レイアウト">
        <Icon size={12}><path d="M.5.5h11v11H.5zM2.500 2.500h7v7h-7zM4 4.500h4M4 6h4M4 7.500h4" stroke="#666" /></Icon>
      </ViewButton>
      <ViewButton $w={35} aria-label="改ページ プレビュー">
        <Icon size={12}><path d="M.5.5h11v11H.5zM3.500.5v6h5v-6M6 .5v4" stroke="#666" /></Icon>
      </ViewButton>
      <ViewButton $w={16} aria-label="縮小">
        <Icon size={7}><path d="M0 3.500h7" stroke="#888" /></Icon>
      </ViewButton>
      <ZoomRange type="range" min="10" max="190" defaultValue="100" aria-label="ズーム" />
      <ViewButton $w={16} aria-label="拡大">
        <Icon size={7}><path d="M0 3.500h7M3.500 0v7" stroke="#888" /></Icon>
      </ViewButton>
      <ZoomText>100%</ZoomText>
    </StatusBar>
  </>
)

const App = () => {
  return (
    <Window>
      <GlobalStyle />
      <Title />
      <Tabs />
      <Ribbon />
      <Sheet />
      <Bottom />
    </Window>
  )
}

export default App
